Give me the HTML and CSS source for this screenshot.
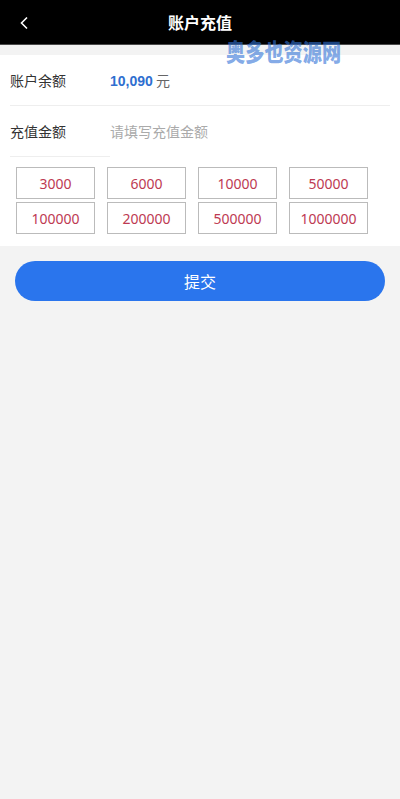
FILE: index.html
```html
<!DOCTYPE html>
<html lang="zh-CN">
<head>
    <meta charset="UTF-8">
    <meta name="viewport" content="width=device-width, initial-scale=1.0">
    <title>账户充值</title>
    <link rel="stylesheet" href="styles.css">
</head>
<body>
    <header class="topbar">
        <a class="back" href="#">
            <svg width="10" height="14" viewBox="0 0 10 14"><path d="M8 1.5 2.5 7 8 12.5" fill="none" stroke="#fff" stroke-width="1.6"/></svg>
        </a>
        <h1>账户充值</h1>
    </header>

    <!-- 水印 -->
    <div class="watermark">奥多也资源网</div>

    <section class="panel">
        <div class="row">
            <span class="label">账户余额</span>
            <span class="balance"><b>10,090</b> 元</span>
        </div>
        <div class="row row-input">
            <span class="label">充值金额</span>
            <input class="amount" type="text" placeholder="请填写充值金额">
        </div>

        <div class="presets">
            <button>3000</button>
            <button>6000</button>
            <button>10000</button>
            <button>50000</button>
            <button>100000</button>
            <button>200000</button>
            <button>500000</button>
            <button>1000000</button>
        </div>
    </section>

    <div class="actions">
        <button class="submit">提交</button>
    </div>
</body>
</html>
```

FILE: styles.css
```css
body {
    margin: 0;
    background-color: #f3f3f3;
    font-family: "Noto Sans CJK SC", "Noto Sans", sans-serif;
    color: #333;
    min-height: 100vh;
}

.topbar {
    height: 44px;
    background-color: #000;
    border-bottom: 1px solid #4a4a4a;
    display: flex;
    align-items: center;
    justify-content: center;
    position: relative;
}

.topbar h1 {
    margin: 0;
    font-size: 16px;
    font-weight: bold;
    color: #fff;
}

.back {
    position: absolute;
    left: 19px;
    top: 16px;
    display: flex;
}

.watermark {
    position: absolute;
    left: 226px;
    top: 36px;
    font-size: 24px;
    font-weight: 900;
    line-height: 30px;
    color: rgba(50, 115, 215, 0.62);
    transform: scaleX(0.8);
    transform-origin: left center;
    pointer-events: none;
}

.panel {
    margin-top: 10px;
    background-color: #fff;
    padding: 0 10px 12px;
}

.row {
    height: 50px;
    display: flex;
    align-items: center;
    border-bottom: 1px solid #eee;
    font-size: 14px;
}

.label {
    width: 100px;
    flex-shrink: 0;
}

.row-input {
    border-bottom: none;
}

.row-input .label {
    height: 50px;
    line-height: 50px;
    border-bottom: 1px solid #eee;
}

.balance {
    color: #666;
}

.balance b {
    color: #2f6fd0;
    font-family: "Liberation Sans", Arial, sans-serif;
    font-size: 14px;
}

.amount {
    border: none;
    outline: none;
    font-family: inherit;
    font-size: 14px;
    padding: 0;
    color: #333;
    flex: 1;
}

.amount::placeholder {
    color: #aaa;
}

.presets {
    display: grid;
    grid-template-columns: repeat(4, 79px);
    column-gap: 12px;
    row-gap: 3px;
    padding: 11px 0 0 6px;
}

.presets button {
    height: 32px;
    background: #fff;
    border: 1px solid #bbb;
    color: #bd3a52;
    font-family: "Noto Sans", sans-serif;
    font-size: 14px;
    padding: 0;
}

.actions {
    padding: 15px 15px;
}

.submit {
    width: 100%;
    height: 40px;
    border: none;
    border-radius: 20px;
    background-color: #2a75ed;
    color: #fff;
    font-family: inherit;
    font-size: 16px;
}
```
